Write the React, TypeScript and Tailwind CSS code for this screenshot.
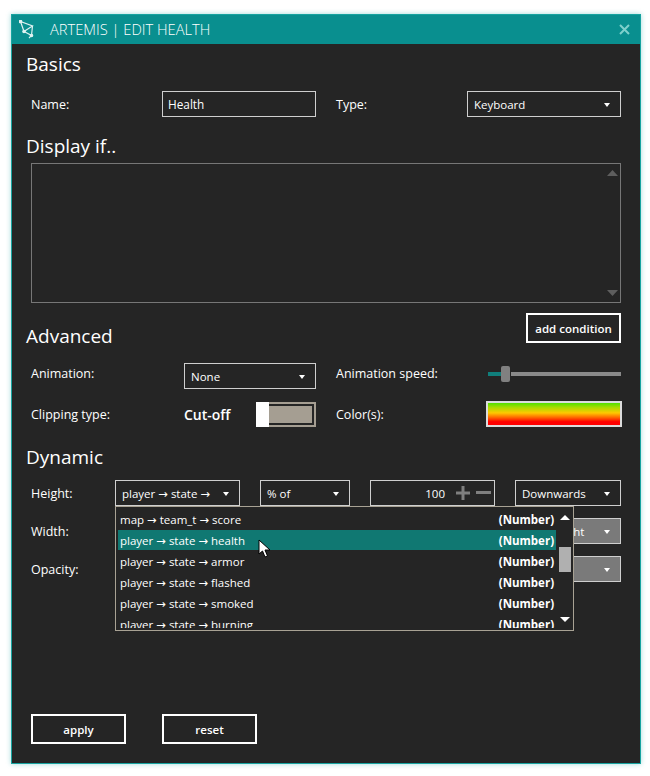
import React from "react";

const items = [
  { id: 1, text: "map → team_t → score" },
  { id: 2, text: "player → state → health", active: true },
  { id: 3, text: "player → state → armor" },
  { id: 4, text: "player → state → flashed" },
  { id: 5, text: "player → state → smoked" },
  { id: 6, text: "player → state → burning" },
];

// the arrow of the UI font is wider than Open Sans' one
const Path = ({ text }: { text: string }) => (
  <span className="whitespace-pre">
    {text.split("→").map((part, i) => (
      <React.Fragment key={i}>
        {i > 0 && <span className="font-['DejaVu_Sans']">→</span>}
        {part}
      </React.Fragment>
    ))}
  </span>
);

const Caret = () => (
  <svg width="6" height="4" viewBox="0 0 6 4" className="mt-[1px]">
    <path d="M0 0H6L3 4Z" fill="#fff" />
  </svg>
);

const Heading = ({ text }: { text: string }) => (
  <h2 className="h-[28px] text-[19px] leading-[28px] text-white">{text}</h2>
);

const Select = ({
  text,
  className = "",
  disabled = false,
}: {
  text: string;
  className?: string;
  disabled?: boolean;
}) => (
  <div
    className={`flex h-[26px] shrink-0 items-center justify-between border border-[#cfcfcf] pl-[6px] pr-[10px] text-[11.500px] text-white ${
      disabled ? "bg-[#7a7a7a]" : ""
    } ${className}`}
  >
    <span className="whitespace-nowrap pt-[2px]">
      <Path text={text} />
    </span>
    <Caret />
  </div>
);

const Number100 = () => (
  <div className="ml-[20px] flex h-[26px] w-[125px] shrink-0 items-center justify-end border border-[#cfcfcf] pr-[3px] text-[11.500px] text-white">
    <span className="pt-[2px]">100</span>
    <svg width="35" height="14" viewBox="0 0 35 14" className="ml-[11px]">
      <path d="M0 7H14M7 0V14" stroke="#7f7f7f" strokeWidth="3" />
      <path d="M20 6.500H35" stroke="#7f7f7f" strokeWidth="3" />
    </svg>
  </div>
);

const Button = ({ text, className = "" }: { text: string; className?: string }) => (
  <div
    className={`flex h-[30px] w-[95px] items-center justify-center border-2 border-white pt-[2px] text-[11.500px] font-semibold text-white ${className}`}
  >
    {text}
  </div>
);

const DynamicRow = ({
  label,
  children,
  className = "",
}: {
  label: string;
  children: React.ReactNode;
  className?: string;
}) => (
  <div className={`relative flex items-center pl-[5px] text-[12.500px] text-white ${className}`}>
    <span className="w-[84px] shrink-0 pt-[2px]">{label}</span>
    {children}
  </div>
);

const Dropdown = () => (
  <div className="absolute left-[89px] top-[26px] z-10 flex h-[125px] w-[459px] border border-[#a8a294] bg-[#252525] pl-[2px] text-[11.500px] text-white">
    <div className="flex h-[121px] w-[439px] flex-col gap-[1px] overflow-hidden pt-[2px]">
      {items.map((item) => (
        <div
          key={item.id}
          className={`flex h-[20px] shrink-0 items-center justify-between px-[2px] pt-[2px] ${
            item.active ? "bg-[#107872]" : ""
          }`}
        >
          <Path text={item.text} />
          <span className="font-bold">(Number)</span>
        </div>
      ))}
    </div>
    <div className="flex w-[17px] flex-col items-center pt-[8px]">
      <svg width="10" height="5" viewBox="0 0 10 5">
        <path d="M0 5H10L5 0Z" fill="#fff" />
      </svg>
      <div className="mt-[27px] h-[25px] w-[12px] bg-[#b0b0b0]" />
      <svg width="10" height="5" viewBox="0 0 10 5" className="mt-[45px]">
        <path d="M0 0H10L5 5Z" fill="#fff" />
      </svg>
    </div>
  </div>
);

export default function App() {
  return (
    <div className="h-[776px] w-[650px] bg-white pl-[11px] pt-[14px] font-['Open_Sans','Liberation_Sans',sans-serif]">
      <div className="flex h-[750px] w-[630px] flex-col border border-[#17a3a0] bg-[#252525] shadow-[0_0_5px_rgba(23,163,160,0.4)]">
        <header className="flex h-[29px] shrink-0 items-center justify-between bg-[#098f8f] pl-[7px] pr-[10px]">
          <div className="flex items-center">
            <svg width="16" height="19" viewBox="0 0 16 19" fill="none" stroke="#dff2f1" strokeWidth="1.200">
              <path d="M1.500 1.500L13.500 6L5 11.500L12.500 15.500L10 18M1.500 1.500L5 11.500M13.500 6L12.500 15.500" />
              <circle cx="1.500" cy="1.500" r="1.200" fill="#dff2f1" />
              <circle cx="5" cy="11.500" r="1.200" fill="#dff2f1" />
              <circle cx="12.500" cy="15.500" r="1.200" fill="#dff2f1" />
            </svg>
            <span className="ml-[15px] text-[14.700px] font-light text-white">ARTEMIS | EDIT HEALTH</span>
          </div>
          <svg width="11" height="11" viewBox="0 0 11 11">
            <path d="M1 1L10 10M10 1L1 10" stroke="#7fd0cc" strokeWidth="2" />
          </svg>
        </header>

        <main className="flex flex-1 flex-col pl-[14px] pr-[19px] pb-[19px] pt-[6px]">
          <Heading text="Basics" />
          <div className="mt-[13px] flex items-center pl-[5px] text-[12.500px] text-white">
            <span className="w-[131px] shrink-0 pt-[2px]">Name:</span>
            <div className="flex h-[26px] w-[154px] shrink-0 items-center border border-[#cfcfcf] pl-[5px] pt-[1px] text-[11.800px]">
              Health
            </div>
            <span className="ml-[20px] w-[131px] shrink-0 pt-[2px]">Type:</span>
            <Select text="Keyboard" className="w-[154px]" />
          </div>

          <div className="mt-[15px]">
            <Heading text="Display if.." />
          </div>
          <div className="ml-[5px] mt-[3px] flex h-[140px] flex-col items-end justify-between border border-[#777] px-[2px] py-[5px]">
            <svg width="11" height="6" viewBox="0 0 11 6" className="mt-[1px]">
              <path d="M0 6H11L5.500 0Z" fill="#5e5e5e" />
            </svg>
            <svg width="11" height="6" viewBox="0 0 11 6" className="mb-[1px]">
              <path d="M0 0H11L5.500 6Z" fill="#5e5e5e" />
            </svg>
          </div>

          <div className="mt-[10px] flex items-start justify-between">
            <div className="mt-[9px]">
              <Heading text="Advanced" />
            </div>
            <Button text="add condition" />
          </div>

          <div className="mt-[13px] flex items-center pl-[5px] text-[12.500px] text-white">
            <span className="mb-[5px] w-[153px] shrink-0 pt-[1px]">Animation:</span>
            <Select text="None" className="w-[132px]" />
            <span className="mb-[5px] ml-[20px] w-[152px] shrink-0 pt-[1px]">Animation speed:</span>
            <div className="mb-[4px] flex w-[133px] shrink-0 items-center">
              <div className="h-[4px] w-[13px] bg-[#107f7c]" />
              <div className="h-[16px] w-[9px] rounded-[2px] bg-[#808080]" />
              <div className="ml-[1px] h-[4px] flex-1 bg-[#8a8a8a]" />
            </div>
          </div>

          <div className="mt-[12px] flex h-[26px] items-center pl-[5px] text-[12.500px] text-white">
            <span className="w-[153px] shrink-0 pt-[2px]">Clipping type:</span>
            <span className="w-[72px] shrink-0 text-[14px] font-semibold">Cut-off</span>
            <div className="flex h-[25px] w-[60px] shrink-0 items-stretch bg-[#a59e92]">
              <div className="w-[13px] bg-white" />
              <div className="m-[2px] ml-0 flex-1 border-2 border-l-0 border-[#252525] bg-[#a59e92]" />
            </div>
            <span className="ml-[20px] w-[150px] shrink-0 pt-[2px]">Color(s):</span>
            <div className="h-[26px] w-[136px] shrink-0 border-2 border-[#dcdcdc] bg-[linear-gradient(to_bottom,#50e000,#a8dc00_20%,#ffc800_45%,#ff6a00_65%,#ff0000_85%)]" />
          </div>

          <div className="mt-[16px]">
            <Heading text="Dynamic" />
          </div>

          <DynamicRow label="Height:" className="mt-[9px]">
            <Select text="player → state →" className="w-[125px]" />
            <Select text="% of" className="ml-[20px] w-[90px]" />
            <Number100 />
            <Select text="Downwards" className="ml-[20px] w-[106px]" />
            <Dropdown />
          </DynamicRow>
          <DynamicRow label="Width:" className="mt-[12px]">
            <Select text="player → state →" className="w-[125px]" />
            <Select text="% of" className="ml-[20px] w-[90px]" />
            <Number100 />
            <Select text="Left to right" disabled className="ml-[20px] w-[106px]" />
          </DynamicRow>
          <DynamicRow label="Opacity:" className="mt-[12px]">
            <Select text="player → state →" className="w-[125px]" />
            <Select text="% of" className="ml-[20px] w-[90px]" />
            <Number100 />
            <Select text="Increase" disabled className="ml-[20px] w-[106px]" />
          </DynamicRow>

          <div className="mt-auto flex gap-[36px] pl-[5px]">
            <Button text="apply" />
            <Button text="reset" />
          </div>
        </main>
      </div>
      <svg
        width="14"
        height="19"
        viewBox="0 0 14 19"
        className="absolute left-[258px] top-[539px] z-20"
      >
        <path d="M1 1V15L4.500 12L7 18L9.500 17L7 11H12Z" fill="#fff" stroke="#000" strokeWidth="1" />
      </svg>
    </div>
  );
}
